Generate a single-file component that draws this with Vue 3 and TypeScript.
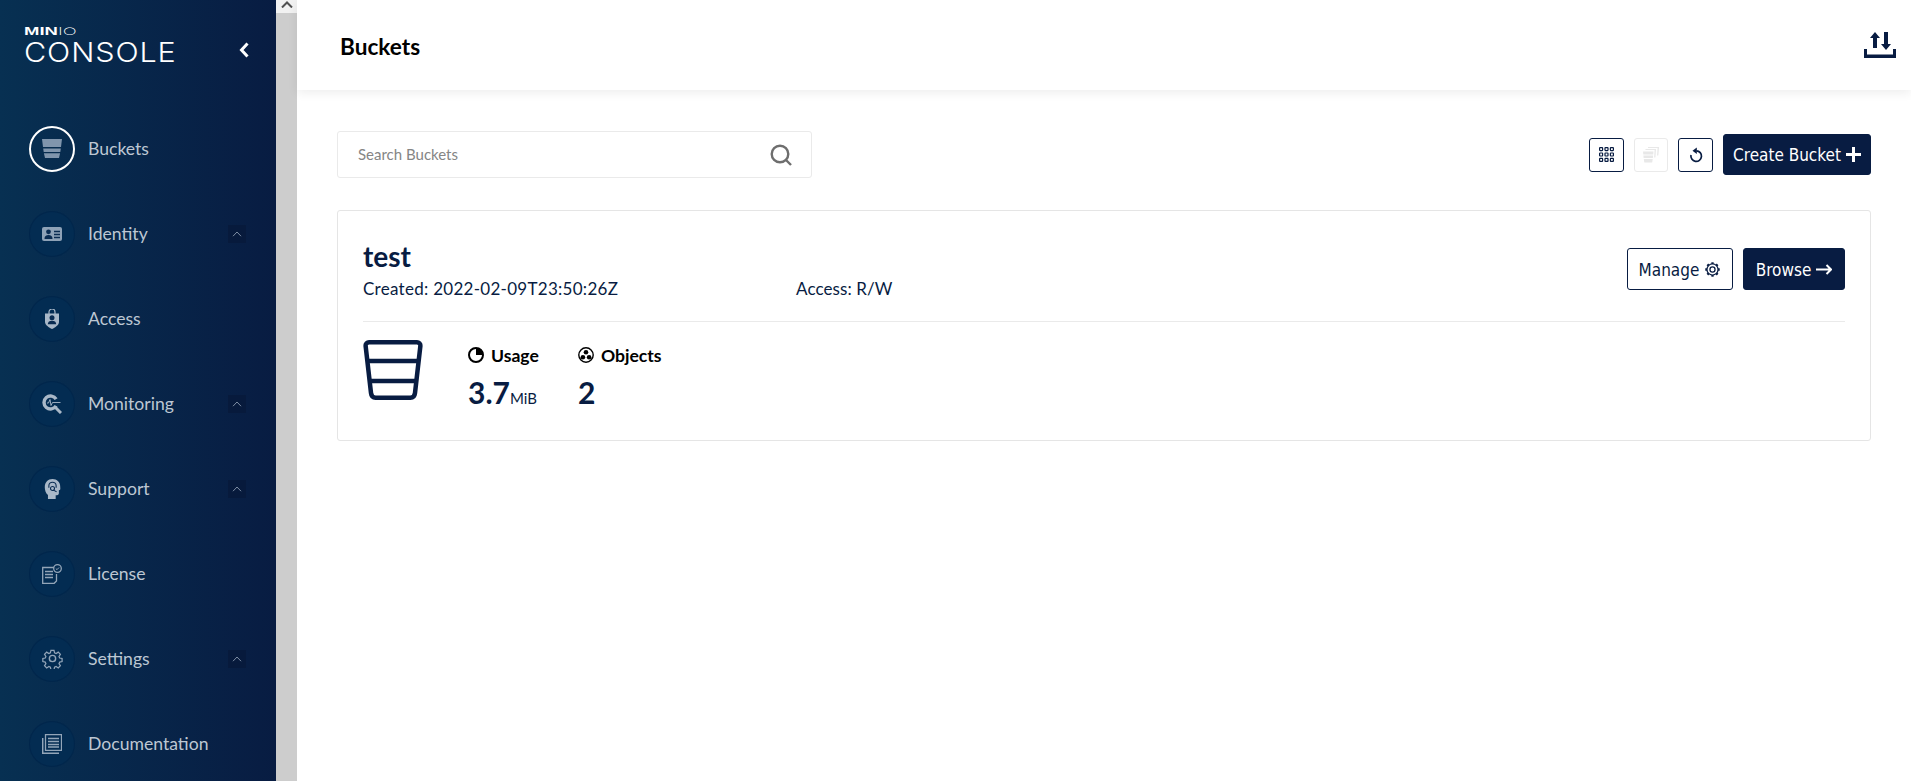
<script setup lang="ts">
interface NavItem { label: string; icon: string; expand: boolean; active?: boolean }
const nav: NavItem[] = [
  { label: 'Buckets', icon: 'bucket', expand: false, active: true },
  { label: 'Identity', icon: 'identity', expand: true },
  { label: 'Access', icon: 'access', expand: false },
  { label: 'Monitoring', icon: 'monitoring', expand: true },
  { label: 'Support', icon: 'support', expand: true },
  { label: 'License', icon: 'license', expand: false },
  { label: 'Settings', icon: 'settings', expand: true },
  { label: 'Documentation', icon: 'docs', expand: false },
]
const gearTeeth = [0, 45, 90, 135, 180, 225, 270, 315]
const gridCells = [0.6, 6, 11.4]
</script>

<template>
  <div class="app">
    <aside class="sidebar">
      <div class="logo-row">
        <div class="logo">
          <div class="logo-minio"><b>MIN</b><span>IO</span></div>
          <div class="logo-console">CONSOLE</div>
        </div>
        <svg class="collapse" width="12" height="18" viewBox="0 0 12 18"><path d="M9.500 2.500 3.500 9l6 6.500" fill="none" stroke="#fff" stroke-width="3"/></svg>
      </div>
      <nav class="nav">
        <div v-for="item in nav" :key="item.label" class="nav-item">
          <span class="nav-circle" :class="{ active: item.active }">
            <svg v-if="item.icon === 'bucket'" width="20" height="19" viewBox="0 0 20 19" fill="#8095ac">
              <path d="M0 0h20l-1 8H1zM1.200 9.500h17.600L18.300 13H1.700zM1.900 14.300h16.200L17 19H3z"/>
            </svg>
            <svg v-else-if="item.icon === 'identity'" width="20" height="14" viewBox="0 0 20 14">
              <rect width="20" height="14" rx="2" fill="#8ea2b7"/>
              <circle cx="6.500" cy="4.800" r="2.400" fill="#0a2c52"/>
              <path d="M2.500 12c0-3 1.500-4 4-4s4 1 4 4z" fill="#0a2c52"/>
              <path d="M12 4.500h6M12 7.500h6M12 10.500h6" stroke="#0a2c52" stroke-width="1.300"/>
            </svg>
            <svg v-else-if="item.icon === 'access'" width="16" height="20" viewBox="0 0 16 20">
              <path d="M5 5V3a3 3 0 0 1 6 0v2" fill="none" stroke="#a9b8c8" stroke-width="1.200"/>
              <path d="M1 4.500h14v8.500c0 3-4 5.500-7 7-3-1.500-7-4-7-7z" fill="#a9b8c8"/>
              <circle cx="8" cy="8.800" r="2.500" fill="#0a2c52"/>
              <path d="M3.800 15.200c0-2.500 1.700-3.500 4.200-3.500s4.200 1 4.200 3.500z" fill="#0a2c52"/>
            </svg>
            <svg v-else-if="item.icon === 'monitoring'" width="20" height="20" viewBox="0 0 20 20" fill="none">
              <path d="M14.100 5.200A6.500 6.500 0 1 0 14.100 11.800" stroke="#a9b8c8" stroke-width="3.400"/>
              <path d="M13 13l6 6" stroke="#a9b8c8" stroke-width="3"/>
              <path d="M5 9h1.500L8 5.500l1 6L10.500 8.500h8" stroke="#a9b8c8" stroke-width=".9"/>
            </svg>
            <svg v-else-if="item.icon === 'support'" width="17" height="20" viewBox="0 0 18 22">
              <path d="M9 0c5 0 8.500 3.500 8.500 8.500 0 1.500.5 3-.5 3.500l-1 .5V16c0 1.500-1.500 2-3.500 2v4H4v-4.500C1.500 15.500.5 12 .5 9 .5 3.500 4 0 9 0z" fill="#a9b8c8"/>
              <path d="M5 9.500V7.500a4 4 0 0 1 8 0v2" fill="none" stroke="#0a2c52" stroke-width="1.200"/>
              <circle cx="9" cy="10.500" r="2.200" fill="none" stroke="#0a2c52" stroke-width="1.200"/>
              <path d="M10.500 12.500l3 1.500" stroke="#0a2c52" stroke-width="1.200"/>
            </svg>
            <svg v-else-if="item.icon === 'license'" width="20" height="20" viewBox="0 0 20 20" fill="none" stroke="#93a5b8" stroke-width="1.300">
              <path d="M12 3.500H.7v15.800h11.500l2.300-2.300V10"/>
              <path d="M3 7.500h8M3 10.500h8M3 13.500h8" stroke-width="1.500"/>
              <circle cx="15.500" cy="4.500" r="3.800"/>
              <path d="M13.800 4.500l1.200 1.200 2-2.200" stroke-width="1"/>
            </svg>
            <svg v-else-if="item.icon === 'settings'" width="21" height="21" viewBox="0 0 24 24" fill="none" stroke="#93a5b8" stroke-width="1.600">
              <circle cx="12" cy="12" r="3.600"/>
              <path d="M10 1.500h4l.7 3.200 2 .9 2.800-1.800 2.800 2.800-1.800 2.800.9 2 3.100.6v4l-3.100.7-.9 2 1.800 2.800-2.800 2.800-2.800-1.800-2 .9-.7 3h-4l-.7-3-2-.9-2.800 1.800-2.800-2.800 1.800-2.800-.9-2-3.100-.7v-4l3.100-.6.900-2-1.800-2.800 2.800-2.800 2.800 1.800 2-.9z" transform="translate(1.400 1.400) scale(.88)"/>
            </svg>
            <svg v-else width="20" height="20" viewBox="0 0 20 20" fill="none" stroke="#93a5b8" stroke-width="1.300">
              <path d="M3.500.7h16v15.600h-16z"/>
              <path d="M6 4.500h11M6 7.500h11M6 10.500h11M6 13h11" stroke-width="1.400"/>
              <path d="M.7 4v15.300H17" stroke-width="1.500"/>
            </svg>
          </span>
          <span class="nav-label">{{ item.label }}</span>
          <span v-if="item.expand" class="nav-expand">
            <svg width="10" height="6" viewBox="0 0 10 6"><path d="M1 5.200 5 1l4 4.200" fill="none" stroke="#7d8da3" stroke-width="1"/></svg>
          </span>
        </div>
      </nav>
    </aside>

    <div class="scrollbar">
      <div class="scrollbar-up">
        <svg width="12" height="7" viewBox="0 0 12 7"><path d="M1 6.500 6 1.500l5 5" fill="none" stroke="#505050" stroke-width="2"/></svg>
      </div>
    </div>

    <main class="main">
      <header class="page-header">
        <h1>Buckets</h1>
        <svg width="32" height="26" viewBox="0 0 32 26" fill="#081c42">
          <path d="M0 17h3v5.500h26V17h3v9H0z"/>
          <path d="M6 6 11 0l5 6h-3v10H9V6z"/>
          <path d="M20 0h4v12h3l-5 6-5-6h3z"/>
        </svg>
      </header>

      <section class="content">
        <div class="toolbar">
          <div class="search">
            <span class="placeholder">Search Buckets</span>
            <svg width="22" height="22" viewBox="0 0 22 22" fill="none" stroke="#6e6e6e" stroke-width="2.400"><circle cx="10" cy="10" r="8.300"/><path d="M16 16l5 5"/></svg>
          </div>
          <div class="actions">
            <button class="icon-btn">
              <svg width="15" height="15" viewBox="0 0 15 15" fill="none" stroke="#081c42" stroke-width="1.200">
                <template v-for="y in gridCells" :key="y">
                  <rect v-for="x in gridCells" :key="x" :x="x" :y="y" width="3" height="3" rx=".5"/>
                </template>
              </svg>
            </button>
            <button class="icon-btn disabled">
              <svg width="16" height="16" viewBox="0 0 16 16" fill="#e8e8e8">
                <path d="M0 4.500h10.500l-.3 3H.3zM.4 8.500h9.700l-.2 2.500H.6zM.8 12h8.900l-.5 3.500H1.300z"/>
                <path d="M2.500 3V2h10.500l-.6 8.500h-1.200l.4-7.500z"/>
                <path d="M5 1V0h11l-.7 8.500h-1.200l.5-7.500z"/>
              </svg>
            </button>
            <button class="icon-btn">
              <svg width="14" height="16" viewBox="0 0 14 16" fill="none">
                <path d="M7.500 3.800A5.300 5.300 0 1 1 2 8" stroke="#081c42" stroke-width="1.700"/>
                <path d="M7.800 .5v6.600L3.500 3.800z" fill="#081c42"/>
              </svg>
            </button>
            <button class="primary-btn create">
              Create Bucket
              <svg width="15" height="15" viewBox="0 0 15 15"><path d="M7.500 0v15M0 7.500h15" stroke="#fff" stroke-width="3"/></svg>
            </button>
          </div>
        </div>

        <article class="card">
          <div class="card-top">
            <div class="card-title">
              <h2>test</h2>
              <div class="meta">
                <span class="created">Created: 2022-02-09T23:50:26Z</span>
                <span class="access">Access: R/W</span>
              </div>
            </div>
            <div class="card-actions">
              <button class="outline-btn">
                Manage
                <svg width="17" height="17" viewBox="0 0 24 24" fill="none" stroke="#081c42" stroke-width="1.800">
                  <circle cx="12" cy="12" r="3.600"/>
                  <circle cx="12" cy="12" r="7.800"/>
                  <path v-for="a in gearTeeth" :key="a" d="M12 1.800v2.400" stroke-width="3.200" :transform="`rotate(${a} 12 12)`"/>
                </svg>
              </button>
              <button class="primary-btn browse">
                Browse
                <svg width="16" height="11" viewBox="0 0 16 11" fill="none" stroke="#fff" stroke-width="2"><path d="M0 5.500h14.500M10.500 1l4.500 4.500-4.500 4.500"/></svg>
              </button>
            </div>
          </div>
          <div class="card-bottom">
            <svg class="bucket-big" width="60" height="60" viewBox="0 0 60 60" fill="none" stroke="#081c42" stroke-width="4.500">
              <path d="M6 2.300h48c2 0 3.600 1.500 3.400 3.500L52 53c-.3 3-2 4.700-4.600 4.700H12.600C10 57.700 8.300 56 8 53L2.600 5.800C2.400 3.800 4 2.300 6 2.300z" stroke-linejoin="round"/>
              <path d="M4 21h52M7 41h46"/>
            </svg>
            <div class="stat usage">
              <div class="stat-label">
                <svg width="16" height="16" viewBox="0 0 16 16"><circle cx="8" cy="8" r="7" fill="none" stroke="#000" stroke-width="2"/><path d="M8 8V1a7 7 0 0 1 7 7z" fill="#000"/></svg>
                Usage
              </div>
              <div class="stat-value">3.7<small>MiB</small></div>
            </div>
            <div class="stat objects">
              <div class="stat-label">
                <svg width="16" height="16" viewBox="0 0 16 16"><circle cx="8" cy="8" r="7.200" fill="none" stroke="#000" stroke-width="1.400"/><circle cx="8" cy="5.200" r="2.300"/><circle cx="4.900" cy="10.300" r="2.300"/><circle cx="11.100" cy="10.300" r="2.300"/></svg>
                Objects
              </div>
              <div class="stat-value">2</div>
            </div>
          </div>
        </article>
      </section>
    </main>
  </div>
</template>

<style>
html, body { margin: 0; height: 100%; overflow: hidden; background: #fff; }
</style>

<style scoped>
.app {
  display: flex;
  height: 781px;
  overflow: hidden;
  font-family: Lato, "Noto Sans", sans-serif;
  color: #081c42;
}
.sidebar {
  flex: 0 0 276px;
  background: linear-gradient(90deg, #073052 0%, #081c42 100%);
  overflow: hidden;
}
.logo-row {
  height: 106px;
  box-sizing: border-box;
  padding: 26px 26px 0 24px;
  display: flex;
  justify-content: space-between;
  align-items: flex-start;
}
.logo { color: #fff; line-height: 1; }
.logo-minio {
  font-family: "Liberation Sans", sans-serif;
  font-size: 10px;
  line-height: 10px;
  height: 10px;
  white-space: nowrap;
  transform-origin: left;
  transform: scaleX(1.85);
}
.logo-minio b { font-weight: 700; }
.logo-minio span { font-family: Inter, sans-serif; font-weight: 200; }
.logo-console {
  font-family: Inter, sans-serif;
  font-weight: 300;
  font-size: 27px;
  line-height: 27px;
  letter-spacing: 0.8px;
  margin-top: 3px;
  transform-origin: left;
  transform: scaleX(1.13);
}
.collapse { margin-top: 15px; }
.nav-item {
  height: 85px;
  display: flex;
  align-items: center;
  padding-left: 29px;
  padding-right: 30px;
}
.nav-circle {
  width: 46px;
  height: 46px;
  box-sizing: border-box;
  border-radius: 50%;
  background: #032c52;
  box-shadow: inset 0 0 0 1px #02264b;
  display: flex;
  align-items: center;
  justify-content: center;
  flex: none;
}
.nav-circle.active { background: transparent; border: 2px solid #fff; box-shadow: none; }
.nav-label {
  margin-left: 13px;
  font-size: 17.6px;
  color: #bdc7d3;
  flex: 1;
}
.nav-expand {
  width: 18px;
  height: 18px;
  background: #071a3c;
  display: flex;
  align-items: center;
  justify-content: center;
}
.scrollbar { flex: 0 0 21px; background: #cdcdcd; }
.scrollbar-up {
  height: 13px;
  background: #f1f1f1;
  display: flex;
  justify-content: center;
  align-items: flex-end;
  overflow: hidden;
  padding-bottom: 5px;
  box-sizing: border-box;
}
.main { flex: 1; min-width: 0; background: #fff; }
.page-header {
  height: 90px;
  display: flex;
  align-items: center;
  justify-content: space-between;
  padding: 0 15px 0 43px;
  box-shadow: 0 3px 10px rgba(0, 0, 0, 0.07);
  position: relative;
}
.page-header h1 { margin: 2px 0 0; font-size: 22.6px; font-weight: 700; color: #000; }
.content { padding: 41px 40px 0; }
.toolbar { display: flex; justify-content: space-between; align-items: center; height: 47px; }
.search {
  width: 475px;
  height: 47px;
  box-sizing: border-box;
  border: 1px solid #eaeaea;
  border-radius: 3px;
  display: flex;
  align-items: center;
  justify-content: space-between;
  padding: 0 19px 0 20px;
}
.placeholder { font-size: 15px; color: #858585; padding-bottom: 2px; }
.actions { display: flex; align-items: center; gap: 10px; }
button { font-family: "DejaVu Sans Condensed", "DejaVu Sans", sans-serif; cursor: pointer; }
.icon-btn {
  width: 35px;
  height: 34px;
  padding: 0;
  background: #fff;
  border: 1px solid #081c42;
  border-radius: 3px;
  display: flex;
  align-items: center;
  justify-content: center;
}
.icon-btn.disabled { width: 34px; border-color: #eaeaea; }
.primary-btn, .outline-btn {
  display: flex;
  align-items: center;
  justify-content: center;
  gap: 5px;
  border-radius: 3px;
  font-size: 17px;
  padding: 0;
}
.primary-btn { background: #081c42; color: #fff; border: 1px solid #081c42; }
.create { width: 148px; height: 41px; }
.browse { width: 102px; height: 42px; padding-top: 1px; }
.outline-btn { width: 106px; height: 42px; background: #fff; color: #081c42; border: 1px solid #081c42; padding-top: 1px; }
.card {
  margin-top: 32px;
  height: 231px;
  box-sizing: border-box;
  border: 1px solid #e5e5e5;
  border-radius: 3px;
  padding: 0 25px;
}
.card-top {
  height: 111px;
  box-sizing: border-box;
  border-bottom: 1px solid #eaeaea;
  display: flex;
  justify-content: space-between;
  padding-top: 25px;
}
.card-title h2 { margin: 0; font-size: 28px; line-height: 40px; font-weight: 700; }
.meta { display: flex; font-size: 17px; line-height: 22px; margin-top: 2px; }
.created { width: 433px; letter-spacing: 0.28px; }
.access { letter-spacing: 0.1px; }
.card-actions { display: flex; gap: 10px; padding-top: 12px; }
.card-bottom { display: flex; padding-top: 18px; }
.bucket-big { flex: none; }
.stat { margin-left: 45px; }
.stat.objects { margin-left: 39px; }
.stat-label { display: flex; align-items: center; gap: 7px; font-size: 17.6px; font-weight: 700; color: #000; height: 20px; margin-top: 5px; }
.stat-value { font-size: 30px; font-weight: 700; line-height: 40px; margin-top: 7px; }
.stat-value small { font-size: 15px; font-weight: 400; }
</style>
